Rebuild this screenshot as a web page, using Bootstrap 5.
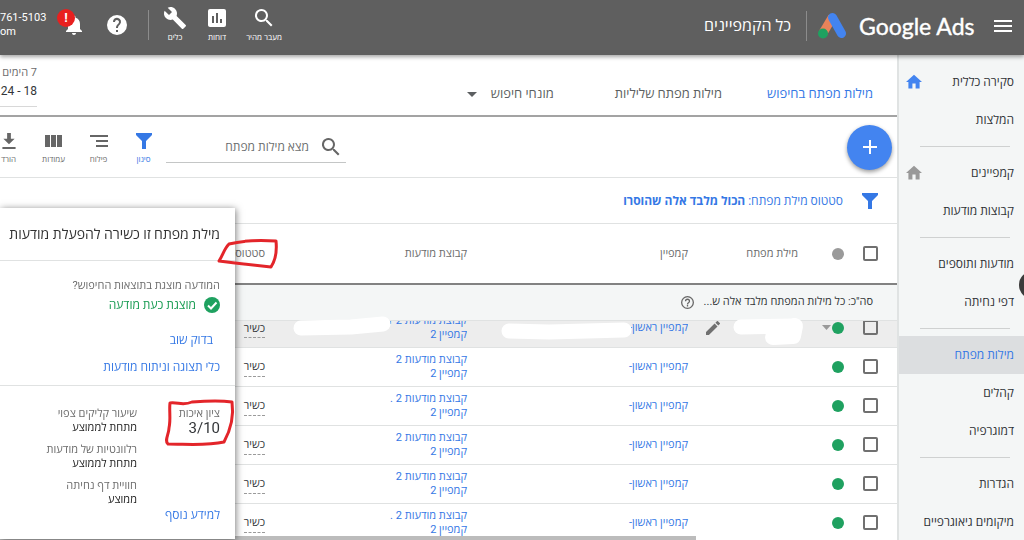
<!DOCTYPE html>
<html lang="he" dir="rtl">
<head>
<meta charset="utf-8">
<meta name="viewport" content="width=device-width, initial-scale=1">
<title>Google Ads</title>
<link href="https://cdn.jsdelivr.net/npm/bootstrap@5.3.0/dist/css/bootstrap.min.css" rel="stylesheet">
<style>
:root{--blue:#3578e5;--line:#e0e2e2;--ink:#333639;--dim:#6c6c6c;--green:#1fa160}
body{font-family:Roboto,"Open Sans","Liberation Sans",sans-serif;font-size:12px;line-height:14px;color:var(--ink);background:#fff;overflow:hidden}
a{text-decoration:none;color:var(--blue)}
svg{display:block;flex:none}
button{background:none;border:0;padding:0;color:inherit;flex:none}
.app{min-height:100vh}
.topbar{height:55px;background:#5f5f5f;color:#fff;box-shadow:0 2px 4px rgba(0,0,0,.35);z-index:5;padding-right:12px}
.vline{width:1px;height:30px;background:#8c8c8c}
.brand-name{font-family:Lato,sans-serif;font-size:23px;line-height:30px;color:#fff;width:117px;white-space:nowrap;-webkit-text-stroke:.4px #fff}
.scope{font-size:16px;line-height:20px}
.tools{height:55px;padding-bottom:6px;margin-right:auto}
.acct{width:54px;font-size:11px;line-height:14px}
.tool{font-size:8px;line-height:10px;gap:3px}
.alert-dot{width:18px;height:18px;background:#e8201f;top:-4px;left:3px;font-size:13px;line-height:18px}
.side{width:127px;background:#f4f6f6;border-left:2px solid #e0e3e3;padding-top:8px}
.side a{height:38px;color:#303336;padding:0 10px 0 7px}
.side a.on{background:#dcdee0;color:var(--blue)}
.side hr{margin:7px 14px 7px 21px;border:0;height:1px;background:#cfd1d1;opacity:1}
.tabs{height:62px;padding:18px 24px 0 0;gap:45px;font-size:13px;border-bottom:2px solid #a3a3a3}
.tabs a{color:#5c5f61}
.tabs a.on{color:var(--blue)}
.tabs .more{gap:14px;margin-right:16px}
.dates{width:37px;padding-bottom:6px;border-bottom:1px solid #d8d8d8;font-size:12px;top:8px;left:0;line-height:18px}
.dates .muted{font-size:11px}
.toolbar{height:61px;border-bottom:1px solid var(--line);padding-right:5px}
.fab{width:45px;height:45px;border-radius:50%;background:#4384f0;box-shadow:0 2px 4px rgba(0,0,0,.4)}
.find{width:180px;height:32px;border-bottom:1px solid #c4c6c6;padding:0 5px;gap:12px}
.find input{border:0;outline:0;width:124px;font-size:12px;line-height:18px;padding:0;background:none;color:#555}
.find input::placeholder{color:#6c6f70;opacity:1}
.act{width:45px;font-size:8px;line-height:10px;color:var(--dim);gap:6px;padding-top:4px}
.act.on{color:var(--blue)}
.act:last-child{margin-left:-14px}
.filterbar{height:46px;border-bottom:1px solid var(--line);padding-right:19px;gap:19px;color:var(--blue)}
.grid{table-layout:fixed;width:100%;border-collapse:collapse;font-size:11px}
.grid th,.grid td{padding:0 24px 0 0;height:39px;border-bottom:1px solid var(--line);font-weight:400;vertical-align:middle;white-space:nowrap}
.grid thead th{height:60px;border-bottom:2px solid #828282;color:var(--dim)}
.grid .tick{padding:0 19px 0 0;width:43px}
.grid .dotc{padding:0 10px 0 0;width:32px}
.grid tr>:nth-child(4){padding-right:18px}
.grid .total td{height:36px;background:#f4f6f6}
.grid .cut td{height:27px;background:#ededed}
.clip-row{height:26px;overflow:hidden;display:flex;align-items:flex-end}
.clip-row>*{height:38px;display:flex;align-items:center}
.kw{width:116px}.camp{width:215px}.grp{width:202px}
.grid input{appearance:none;width:15px;height:15px;border:2px solid #707070;border-radius:2px;margin:0;display:block;background:#fff}
.grid .cut input{background:none}
.dot{width:12px;height:12px;border-radius:50%;background:var(--green);display:block}
.dot.off{background:#9a9a9a}
.stat{border-bottom:1px dashed #9a9a9a;padding-bottom:3px;color:var(--ink)}
.cut .stat{padding-bottom:2px}
.grid .cut td:last-child{vertical-align:top;line-height:16px}
.pop{top:208px;left:0;width:235px;height:331px;background:#fff;box-shadow:1px 1px 7px rgba(0,0,0,.5);z-index:6;font-size:11px}
.pop h2{font-size:14px;line-height:20px;margin:0;padding:16px 15px;height:53px;border-bottom:1px solid var(--line);white-space:nowrap;color:#333}
.pop a,.pop .showing{font-size:12px}
.pop .showing{color:#159a50}
.pop .seen{height:125px;padding:18px 15px 0;border-bottom:1px solid var(--line)}
.pop .quality{padding:21px 15px 0;gap:28px}
.pop dd{margin:0 0 8px;color:#222}
.pop dd:last-child{margin:0}
.muted{color:var(--dim)}
.score{font-size:15px;line-height:15px}
.scrollx{left:0;bottom:0;width:68%;height:4px;background:#bcbcbc;z-index:5}
.knob{width:28px;height:28px;border-radius:50%;background:#3b3b3b;right:-23px;top:271px;z-index:4}
.ink{top:0;left:0;z-index:7;pointer-events:none}
</style>
</head>
<body>
<div class="app d-flex flex-column position-relative overflow-hidden">
<header class="topbar d-flex align-items-center position-relative">
  <button aria-label="תפריט" class="mb-1"><svg width="18" height="14" viewBox="0 0 18 14" fill="#fff"><path d="M0 1h18v2H0zM0 6h18v2H0zM0 11h18v2H0z"/></svg></button>
  <a href="#" class="d-flex align-items-center mb-1" style="gap:12px;margin-right:18px">
    <span class="brand-name" dir="ltr">Google Ads</span>
    <svg width="29" height="28" viewBox="0 0 29 28"><path d="M14.500 5 5 21" stroke="#e8835a" stroke-width="9" fill="none"/><path d="M14.500 5.500 23.500 21.500" stroke="#4384f0" stroke-width="9" stroke-linecap="round"/><circle cx="5" cy="21.500" r="5" fill="#1fa160"/></svg>
  </a>
  <span class="vline mb-1" style="margin:0 11px 0 15px"></span>
  <span class="scope mb-1">כל הקמפיינים</span>
  <div class="tools d-flex align-items-center" dir="ltr">
    <div class="acct">761-5103<br>om</div>
    <button class="position-relative" style="width:32px" aria-label="התראות"><svg class="ms-2" width="24" height="24" viewBox="0 0 24 24" fill="#fff"><path d="M12 22c1.100 0 2-.9 2-2h-4c0 1.100.9 2 2 2zm6-6v-5c0-3.100-1.600-5.600-4.500-6.300V4a1.500 1.500 0 0 0-3 0v.7C7.600 5.400 6 7.900 6 11v5l-2 2v1h16v-1z"/></svg><span class="alert-dot position-absolute rounded-circle fw-bold">!</span></button>
    <button style="margin-left:19px;width:24px" aria-label="עזרה"><svg width="24" height="24" viewBox="0 0 24 24" fill="#fff"><path d="M12 2a10 10 0 1 0 0 20 10 10 0 0 0 0-20zm1 17h-2v-2h2zm2.070-7.750-.9.920C13.450 12.900 13 13.500 13 15h-2v-.5c0-1.100.450-2.100 1.170-2.830l1.240-1.260A2 2 0 1 0 10 9H8a4 4 0 1 1 7.070 2.250z"/></svg></button>
    <span class="vline" style="margin-left:19px"></span>
    <button class="tool d-flex flex-column align-items-center" style="width:42px;margin-left:5px"><svg width="24" height="24" viewBox="0 0 24 24" fill="#fff"><path d="m22.700 19-9.100-9.100c.9-2.300.4-5-1.500-6.900-2-2-5-2.400-7.400-1.300L9 6 6 9 1.600 4.700C.4 7.100.9 10.100 2.900 12.100c1.900 1.900 4.600 2.400 6.900 1.500l9.100 9.100c.4.4 1 .4 1.400 0l2.300-2.300c.5-.4.5-1.100.1-1.400z"/></svg>כלים</button>
    <button class="tool d-flex flex-column align-items-center" style="width:42px"><svg width="24" height="24" viewBox="0 0 24 24" fill="#fff"><path d="M19 3H5a2 2 0 0 0-2 2v14c0 1.100.9 2 2 2h14a2 2 0 0 0 2-2V5a2 2 0 0 0-2-2zM9 17H7v-7h2zm4 0h-2V7h2zm4 0h-2v-4h2z"/></svg>דוחות</button>
    <button class="tool d-flex flex-column align-items-center" style="width:52px"><svg width="24" height="24" viewBox="0 0 24 24" fill="#fff"><path d="M15.500 14h-.8l-.3-.3A6.500 6.500 0 1 0 13.700 14.400l.3.300v.8l5 5 1.500-1.500zm-6 0a4.500 4.500 0 1 1 0-9 4.500 4.500 0 0 1 0 9z"/></svg>מעבר מהיר</button>
  </div>
</header>

<div class="d-flex flex-grow-1">
<nav class="side flex-shrink-0">
  <a href="#" class="d-flex align-items-center justify-content-between">סקירה כללית<svg width="16" height="16" viewBox="2 2 20 20" fill="#4384f0"><path d="M10 20v-6h4v6h5v-8h3L12 3 2 12h3v8z"/></svg></a>
  <a href="#" class="d-flex align-items-center">המלצות</a>
  <hr>
  <a href="#" class="d-flex align-items-center justify-content-between">קמפיינים<svg width="16" height="16" viewBox="2 2 20 20" fill="#999"><path d="M10 20v-6h4v6h5v-8h3L12 3 2 12h3v8z"/></svg></a>
  <a href="#" class="d-flex align-items-center">קבוצות מודעות</a>
  <hr>
  <a href="#" class="d-flex align-items-center">מודעות ותוספים</a>
  <a href="#" class="d-flex align-items-center">דפי נחיתה</a>
  <hr>
  <a href="#" class="d-flex align-items-center on">מילות מפתח</a>
  <a href="#" class="d-flex align-items-center">קהלים</a>
  <a href="#" class="d-flex align-items-center">דמוגרפיה</a>
  <hr>
  <a href="#" class="d-flex align-items-center">הגדרות</a>
  <a href="#" class="d-flex align-items-center text-nowrap">מיקומים גיאוגרפיים</a>
</nav>

<main class="flex-grow-1 position-relative" style="min-width:0">
  <div class="tabs d-flex align-items-center position-relative">
    <a href="#" class="on">מילות מפתח בחיפוש</a>
    <a href="#">מילות מפתח שליליות</a>
    <a href="#" class="more d-flex align-items-center">מונחי חיפוש<svg width="10" height="5" fill="#5c5f61"><path d="M0 0h10L5 5z"/></svg></a>
    <div class="dates position-absolute"><span class="muted text-nowrap">7 הימים</span><br><span dir="ltr" class="text-nowrap">24 - 18</span></div>
  </div>
  <div class="toolbar d-flex align-items-center">
    <button class="fab d-flex align-items-center justify-content-center" aria-label="הוספה"><svg width="14" height="14"><path d="M7 0v14M0 7h14" stroke="#fff" stroke-width="2"/></svg></button>
    <div class="d-flex align-items-center" style="margin-right:auto">
      <label class="find d-flex align-items-center"><svg width="20" height="20" viewBox="2 2 20 20" fill="#666"><path d="M15.500 14h-.8l-.3-.3A6.500 6.500 0 1 0 13.700 14.400l.3.300v.8l5 5 1.500-1.500zm-6 0a4.500 4.500 0 1 1 0-9 4.500 4.500 0 0 1 0 9z"/></svg><input type="text" placeholder="מצא מילות מפתח" aria-label="מצא מילות מפתח"></label>
      <button class="act on d-flex flex-column align-items-center"><svg width="16" height="16" viewBox="0 0 16 16" fill="currentColor"><path d="M0 0h16v2l-6 6v8H6V8L0 2z"/></svg>סינון</button>
      <button class="act d-flex flex-column align-items-center"><svg width="18" height="16" viewBox="0 0 18 16" fill="#666"><path d="M0 2h18v2H0zM6 7h12v2H6zM6 12h12v2H6z"/></svg>פילוח</button>
      <button class="act d-flex flex-column align-items-center"><svg width="17" height="16" viewBox="0 0 17 16" fill="#666"><path d="M0 2h5v12H0zM6 2h5v12H6zM12 2h5v12h-5z"/></svg>עמודות</button>
      <button class="act d-flex flex-column align-items-center"><svg width="14" height="16" viewBox="0 0 14 17" fill="#666"><path d="M5 0h4v6h4l-6 6-6-6h4zM0 15h14v2H0z"/></svg>הורד</button>
    </div>
  </div>
  <div class="filterbar d-flex align-items-center"><svg width="16" height="16" viewBox="0 0 16 16" fill="currentColor"><path d="M0 0h16v2l-6 6v8H6V8L0 2z"/></svg><span>סטטוס מילת מפתח: <b>הכול מלבד אלה שהוסרו</b></span></div>
  <table class="grid">
    <thead><tr><th class="tick"><input type="checkbox" aria-label="בחר הכול"></th><th class="dotc"><span class="dot off"></span></th><th class="kw">מילת מפתח</th><th class="camp">קמפיין</th><th class="grp">קבוצת מודעות</th><th>סטטוס</th></tr></thead>
    <tbody>
    <tr class="total"><td colspan="6"><span class="d-flex align-items-center" style="gap:10px">סה"כ: כל מילות המפתח מלבד אלה ש...<svg width="13" height="13" viewBox="2 2 20 20" fill="#666"><path d="M11 18h2v-2h-2zM12 2a10 10 0 1 0 0 20 10 10 0 0 0 0-20zm0 18a8 8 0 1 1 0-16 8 8 0 0 1 0 16zm0-14a4 4 0 0 0-4 4h2a2 2 0 1 1 4 0c0 2-3 1.750-3 5h2c0-2.250 3-2.500 3-5a4 4 0 0 0-4-4z"/></svg></span></td></tr>
    <tr class="cut"><td class="tick"><div class="clip-row"><span><input type="checkbox" aria-label="בחר"></span></div></td><td class="dotc"><div class="clip-row"><span style="gap:1px"><i class="dot"></i><svg width="9" height="5" fill="#999"><path d="M0 0h9L4.500 5z"/></svg></span></div></td><td><div class="clip-row justify-content-end"><button aria-label="עריכה"><svg width="14" height="14" viewBox="3 3 18 18" fill="#707070"><path d="M3 17.250V21h3.750L17.800 9.940l-3.750-3.750zM20.700 7a1 1 0 0 0 0-1.400l-2.300-2.300a1 1 0 0 0-1.400 0l-1.900 1.800 3.750 3.750z"/></svg></button></div></td><td><div class="clip-row"><a href="#">קמפיין ראשון-</a></div></td><td><div class="clip-row"><a href="#"><span>קבוצת מודעות 2 1<br>קמפיין 2</span></a></div></td><td><span class="stat">כשיר</span></td></tr>
    <tr><td class="tick"><input type="checkbox" aria-label="בחר"></td><td class="dotc"><i class="dot"></i></td><td></td><td><a href="#">קמפיין ראשון-</a></td><td><a href="#">קבוצת מודעות 2<br>קמפיין 2</a></td><td><span class="stat">כשיר</span></td></tr>
    <tr><td class="tick"><input type="checkbox" aria-label="בחר"></td><td class="dotc"><i class="dot"></i></td><td></td><td><a href="#">קמפיין ראשון-</a></td><td><a href="#">קבוצת מודעות 2 .<br>קמפיין 2</a></td><td><span class="stat">כשיר</span></td></tr>
    <tr><td class="tick"><input type="checkbox" aria-label="בחר"></td><td class="dotc"><i class="dot"></i></td><td></td><td><a href="#">קמפיין ראשון-</a></td><td><a href="#">קבוצת מודעות 2<br>קמפיין 2</a></td><td><span class="stat">כשיר</span></td></tr>
    <tr><td class="tick"><input type="checkbox" aria-label="בחר"></td><td class="dotc"><i class="dot"></i></td><td></td><td><a href="#">קמפיין ראשון-</a></td><td><a href="#">קבוצת מודעות 2<br>קמפיין 2</a></td><td><span class="stat">כשיר</span></td></tr>
    <tr><td class="tick"><input type="checkbox" aria-label="בחר"></td><td class="dotc"><i class="dot"></i></td><td></td><td><a href="#">קמפיין ראשון-</a></td><td><a href="#">קבוצת מודעות 2 .<br>קמפיין 2</a></td><td><span class="stat">כשיר</span></td></tr>
    </tbody>
  </table>
</main>
</div>

<section class="pop position-absolute">
  <h2>מילת מפתח זו כשירה להפעלת מודעות</h2>
  <div class="seen">
    <div class="muted">המודעה מוצגת בתוצאות החיפוש?</div>
    <div class="showing d-flex align-items-center mt-1 gap-2"><svg width="16" height="16"><circle cx="8" cy="8" r="8" fill="#1fa160"/><path d="m4 8.500 3 3 5.500-6" stroke="#fff" stroke-width="2" fill="none"/></svg>מוצגת כעת מודעה</div>
    <div style="padding:20px 7px 0 0"><a href="#">בדוק שוב</a></div>
    <div style="padding-top:12px"><a href="#">כלי תצוגה וניתוח מודעות</a></div>
  </div>
  <div class="quality d-flex">
    <div style="width:55px"><div class="muted text-nowrap">ציון איכות</div><div class="score" dir="ltr" style="text-align:right">3/10</div></div>
    <dl class="m-0 text-nowrap">
      <dt class="fw-normal muted">שיעור קליקים צפוי</dt><dd>מתחת לממוצע</dd>
      <dt class="fw-normal muted">רלוונטיות של מודעות</dt><dd>מתחת לממוצע</dd>
      <dt class="fw-normal muted">חוויית דף נחיתה</dt><dd>ממוצע</dd>
    </dl>
  </div>
  <div style="padding:1px 15px 0"><a href="#">למידע נוסף</a></div>
</section>
<span class="scrollx position-fixed"></span>
<span class="knob position-absolute"></span>
<svg class="ink position-absolute" width="1024" height="540" fill="none" aria-hidden="true">
  <g stroke="#fff" stroke-linecap="round" stroke-linejoin="round"><path d="M301 328l50-1 32-3" stroke-width="15"/><path d="M509 331l40 1 75-2" stroke-width="15"/><path d="M741 327l53-1" stroke-width="15"/><path d="M773 337l20-1 2-10" stroke-width="16"/></g>
  <path d="M229 244c-5 5-6 11-10 17l16 2 36 4c4-6 6-16 5-26-16-1-32-1-47 3z" stroke="#e3252a" stroke-width="3" stroke-linejoin="round"/>
  <path d="M170 403c8-1 13 3 22-1 13-1 26-2 40 0 2 14-2 29-8 40-18 4-37 2-56 2-4-3 1-10 1-16 2-9 0-17 1-25z" stroke="#e3252a" stroke-width="3" stroke-linejoin="round"/>
</svg>
</div>
<script src="https://cdn.jsdelivr.net/npm/bootstrap@5.3.0/dist/js/bootstrap.bundle.min.js"></script>
</body>
</html>
